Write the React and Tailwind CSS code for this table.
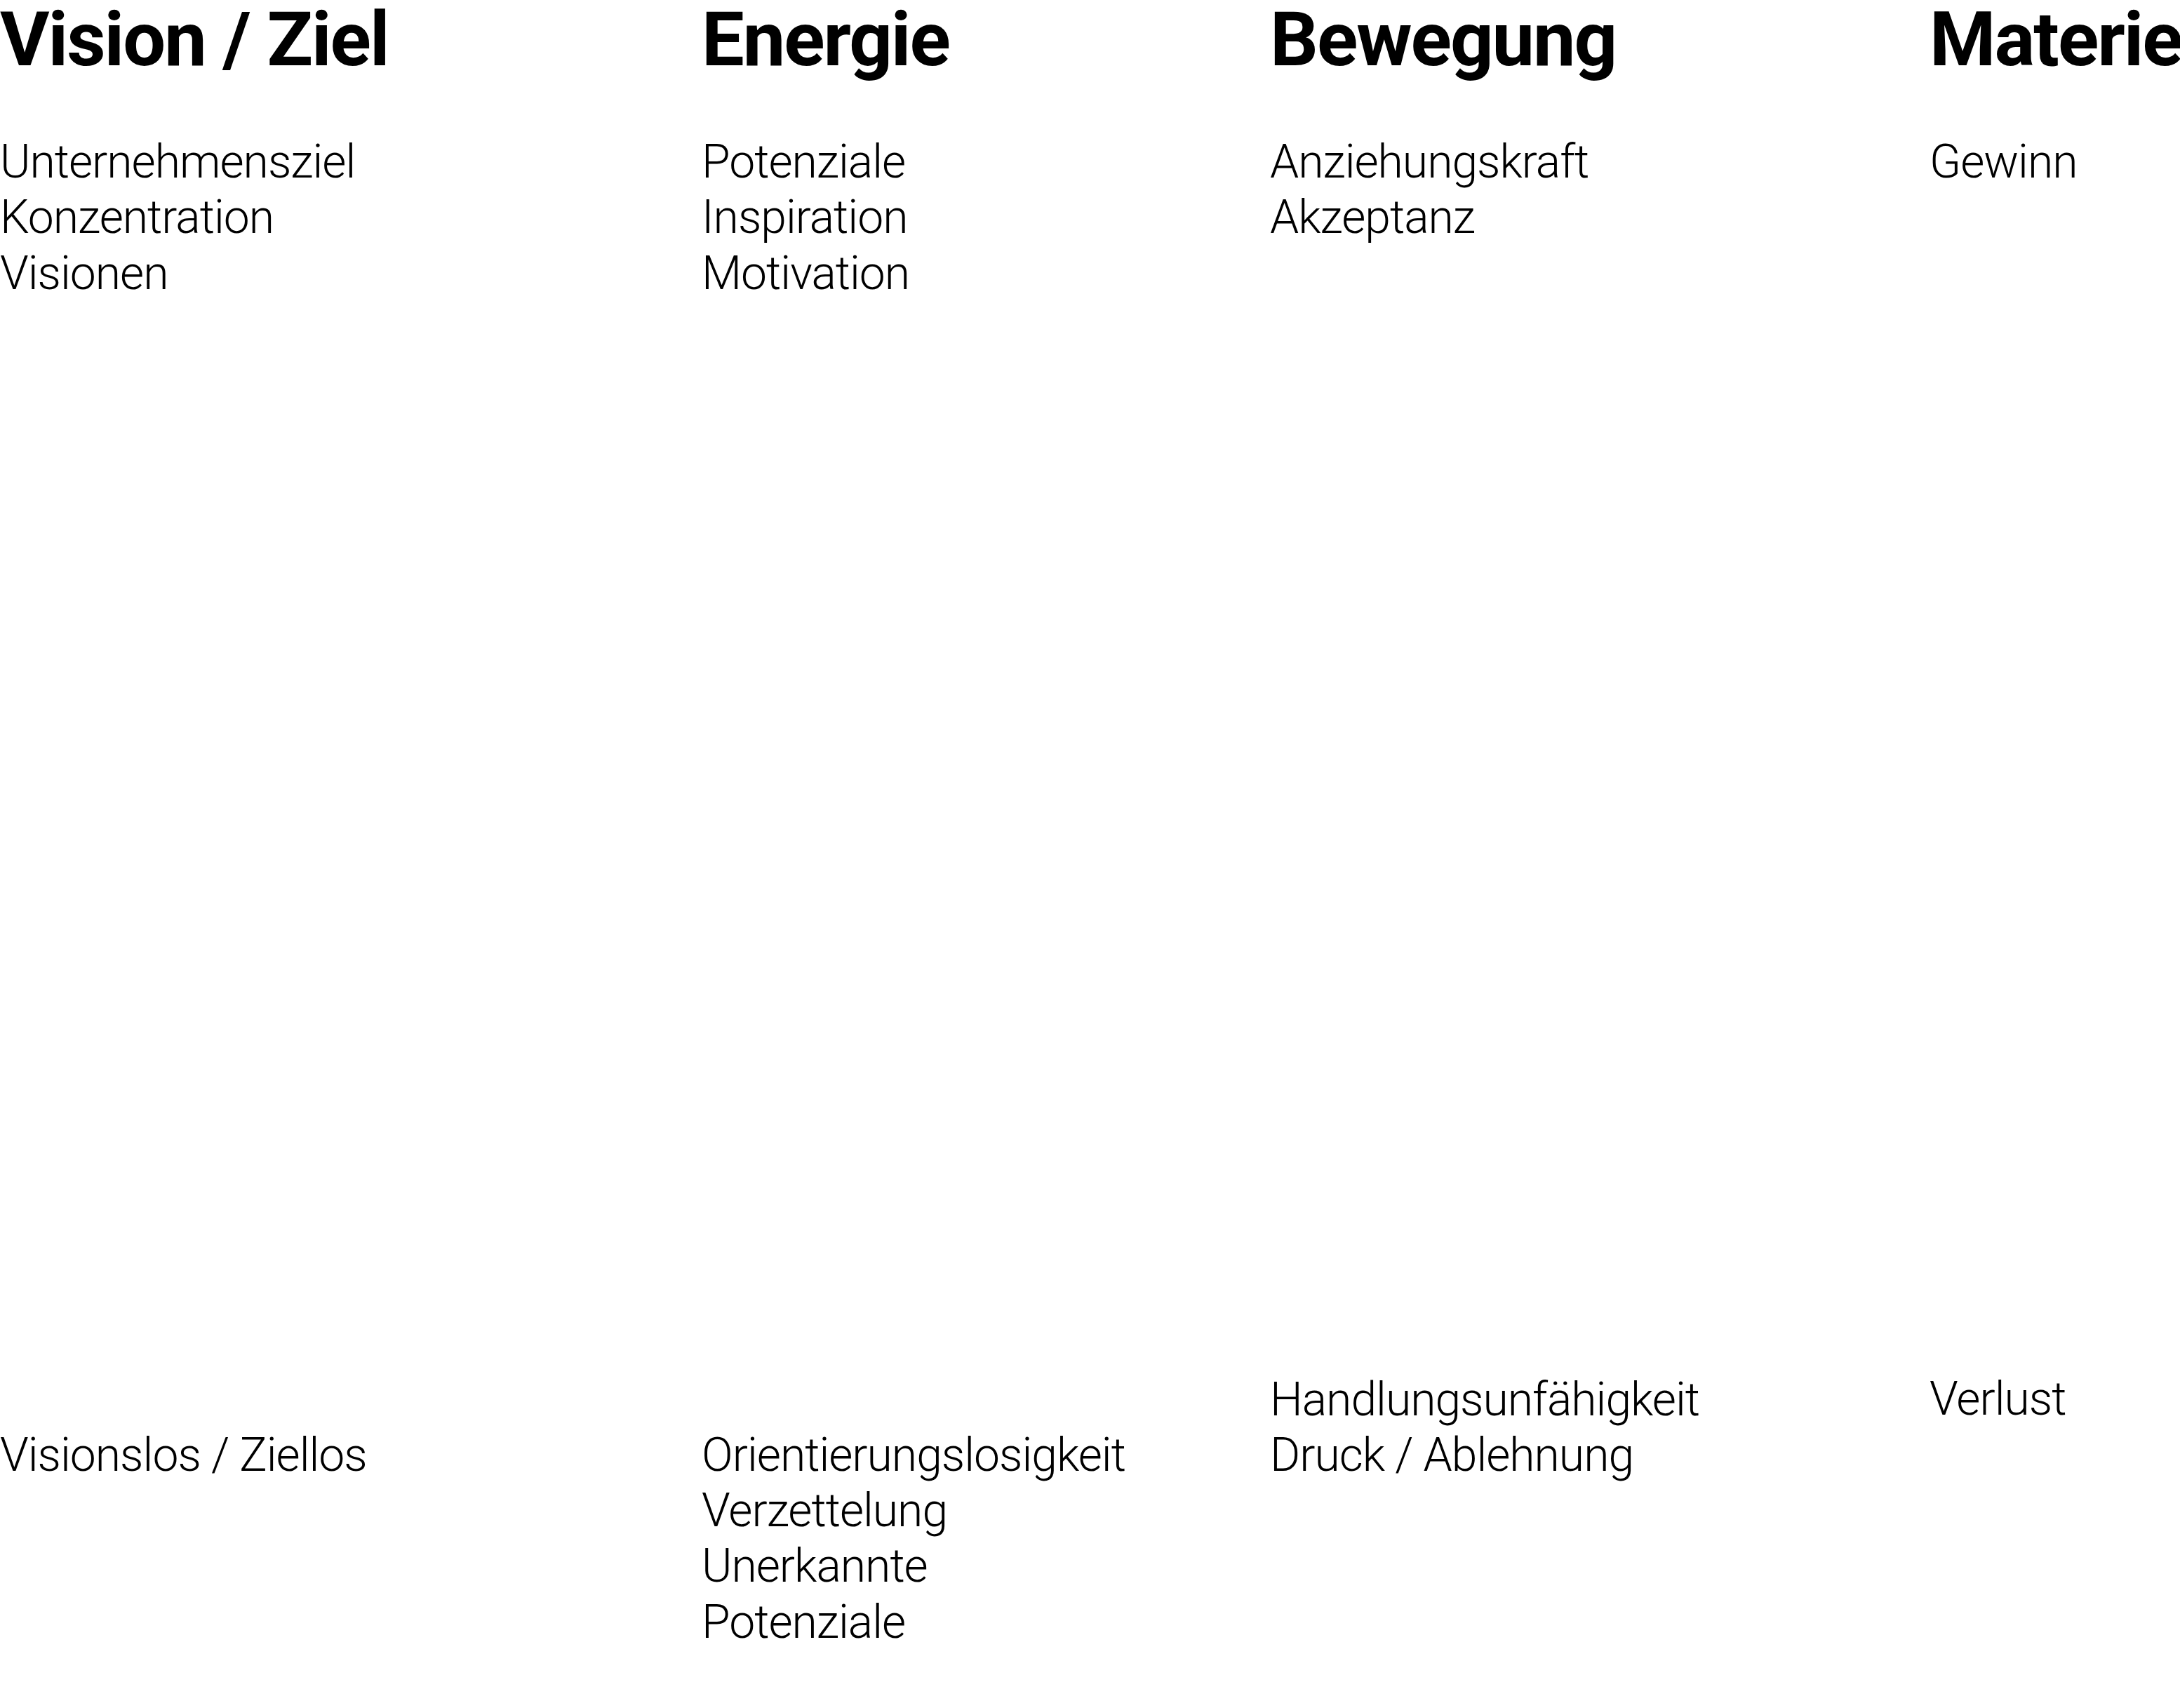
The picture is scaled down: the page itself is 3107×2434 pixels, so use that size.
import React from "react";

const columns = [
  {
    title: "Vision / Ziel",
    plus: ["Unternehmensziel", "Konzentration", "Visionen"],
    minus: ["Visionslos / Ziellos"],
    gap: "mt-[1605px]",
  },
  {
    title: "Energie",
    plus: ["Potenziale", "Inspiration", "Motivation"],
    minus: ["Orientierungslosigkeit", "Verzettelung", "Unerkannte", "Potenziale"],
    gap: "mt-[1605px]",
  },
  {
    title: "Bewegung",
    plus: ["Anziehungskraft", "Akzeptanz"],
    minus: ["Handlungsunfähigkeit", "Druck / Ablehnung"],
    gap: "mt-[1605px]",
  },
  {
    title: "Materie",
    plus: ["Gewinn"],
    minus: ["Verlust"],
    gap: "mt-[1684px]",
  },
];

const App = () => {
  return (
    <div className="min-h-screen w-full overflow-hidden bg-white text-black font-['Roboto',sans-serif]">
      <div className="grid grid-cols-[1000px_810px_940px_max-content]">
        {columns.map(col => (
          <div key={col.title} className="flex flex-col whitespace-nowrap">
            <h2 className="text-[108px] leading-[112px] font-bold tracking-[-2px]">{col.title}</h2>
            <ul className="mt-[79px] text-[66px] leading-[79.3px] font-light tracking-[-1px]">
              {col.plus.map(item => (
                <li key={item}>{item}</li>
              ))}
            </ul>
            <ul className={`${col.gap} text-[66px] leading-[79.3px] font-light tracking-[-1px]`}>
              {col.minus.map(item => (
                <li key={item}>{item}</li>
              ))}
            </ul>
          </div>
        ))}
      </div>
    </div>
  );
};

export default App;
